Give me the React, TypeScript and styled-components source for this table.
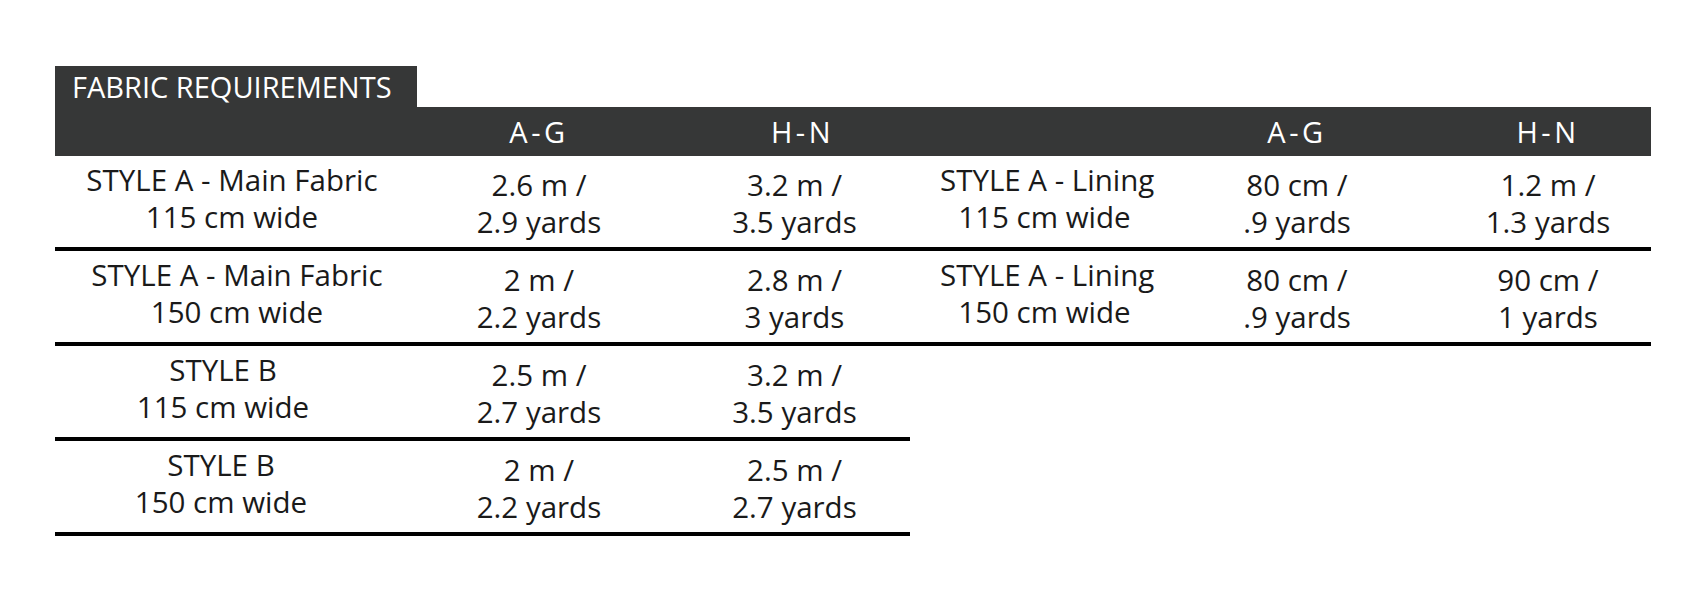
import styled, { createGlobalStyle } from 'styled-components';

const GlobalStyle = createGlobalStyle`
    body {
        margin: 0;
        background: #ffffff;
        font-family: "Open Sans", "Noto Sans", sans-serif;
        color: #1a1a1a;
    }
`;

const Page = styled.div`
    padding: 66px 0 0 55px;
`;

const Tab = styled.div`
    width: 362px;
    height: 41px;
    box-sizing: border-box;
    padding-left: 17px;
    background: #363737;
    color: #ffffff;
    font-size: 29px;
    line-height: 41px;
    white-space: nowrap;
`;

const Table = styled.div`
    display: grid;
    grid-template-columns: 362px 244px 249px 239px 296px 206px;
    width: 1596px;
`;

// offset moves the centred text sideways by that many px
const HeadCell = styled.div<{ offset?: number }>`
    height: 49px;
    box-sizing: border-box;
    padding-left: ${(p) => Math.max(0, (p.offset ?? 0) * 2)}px;
    background: #363737;
    color: #ffffff;
    font-size: 29px;
    letter-spacing: 3.5px;
    display: flex;
    align-items: center;
    justify-content: center;
`;

const Cell = styled.div<{ offset?: number; value?: boolean }>`
    height: 95px;
    box-sizing: border-box;
    padding-top: ${(p) => (p.value ? 10 : 5)}px;
    padding-left: ${(p) => Math.max(0, (p.offset ?? 0) * 2)}px;
    padding-right: ${(p) => Math.max(0, -(p.offset ?? 0) * 2)}px;
    border-bottom: 4px solid #000000;
    font-size: 29.5px;
    line-height: 37px;
    text-align: center;
    white-space: nowrap;
`;

const Blank = styled.div`
    height: 95px;
`;

type Row = {
    label: [string, string];
    ag: [string, string];
    hn: [string, string];
    labelOffset: number;
};

const mainRows: Row[] = [
    { label: ['STYLE A - Main Fabric', '115 cm wide'], ag: ['2.6 m /', '2.9 yards'], hn: ['3.2 m /', '3.5 yards'], labelOffset: -4 },
    { label: ['STYLE A - Main Fabric', '150 cm wide'], ag: ['2 m /', '2.2 yards'], hn: ['2.8 m /', '3 yards'], labelOffset: 1 },
    { label: ['STYLE B', '115 cm wide'], ag: ['2.5 m /', '2.7 yards'], hn: ['3.2 m /', '3.5 yards'], labelOffset: -13 },
    { label: ['STYLE B', '150 cm wide'], ag: ['2 m /', '2.2 yards'], hn: ['2.5 m /', '2.7 yards'], labelOffset: -15 },
];

const liningRows: Row[] = [
    { label: ['STYLE A - Lining', '115 cm wide'], ag: ['80 cm /', '.9 yards'], hn: ['1.2 m /', '1.3 yards'], labelOffset: 15 },
    { label: ['STYLE A - Lining', '150 cm wide'], ag: ['80 cm /', '.9 yards'], hn: ['90 cm /', '1 yards'], labelOffset: 15 },
];

const Lines = ({ text }: { text: [string, string] }) => (
    <>
        {text[0]}
        <br />
        {text[1]}
    </>
);

const App = () => {
    return (
        <Page>
            <GlobalStyle />
            <Tab>FABRIC REQUIREMENTS</Tab>
            <Table>
                <HeadCell />
                <HeadCell>A-G</HeadCell>
                <HeadCell offset={17}>H-N</HeadCell>
                <HeadCell />
                <HeadCell>A-G</HeadCell>
                <HeadCell>H-N</HeadCell>
                {mainRows.map((row, i) => {
                    const lining = liningRows[i];
                    return [
                        <Cell key={`l${i}`} offset={row.labelOffset}><Lines text={row.label} /></Cell>,
                        <Cell key={`a${i}`} value><Lines text={row.ag} /></Cell>,
                        <Cell key={`h${i}`} value offset={9}><Lines text={row.hn} /></Cell>,
                        lining ? <Cell key={`ll${i}`} offset={lining.labelOffset}><Lines text={lining.label} /></Cell> : <Blank key={`ll${i}`} />,
                        lining ? <Cell key={`la${i}`} value><Lines text={lining.ag} /></Cell> : <Blank key={`la${i}`} />,
                        lining ? <Cell key={`lh${i}`} value><Lines text={lining.hn} /></Cell> : <Blank key={`lh${i}`} />,
                    ];
                })}
            </Table>
        </Page>
    );
};

export default App;
